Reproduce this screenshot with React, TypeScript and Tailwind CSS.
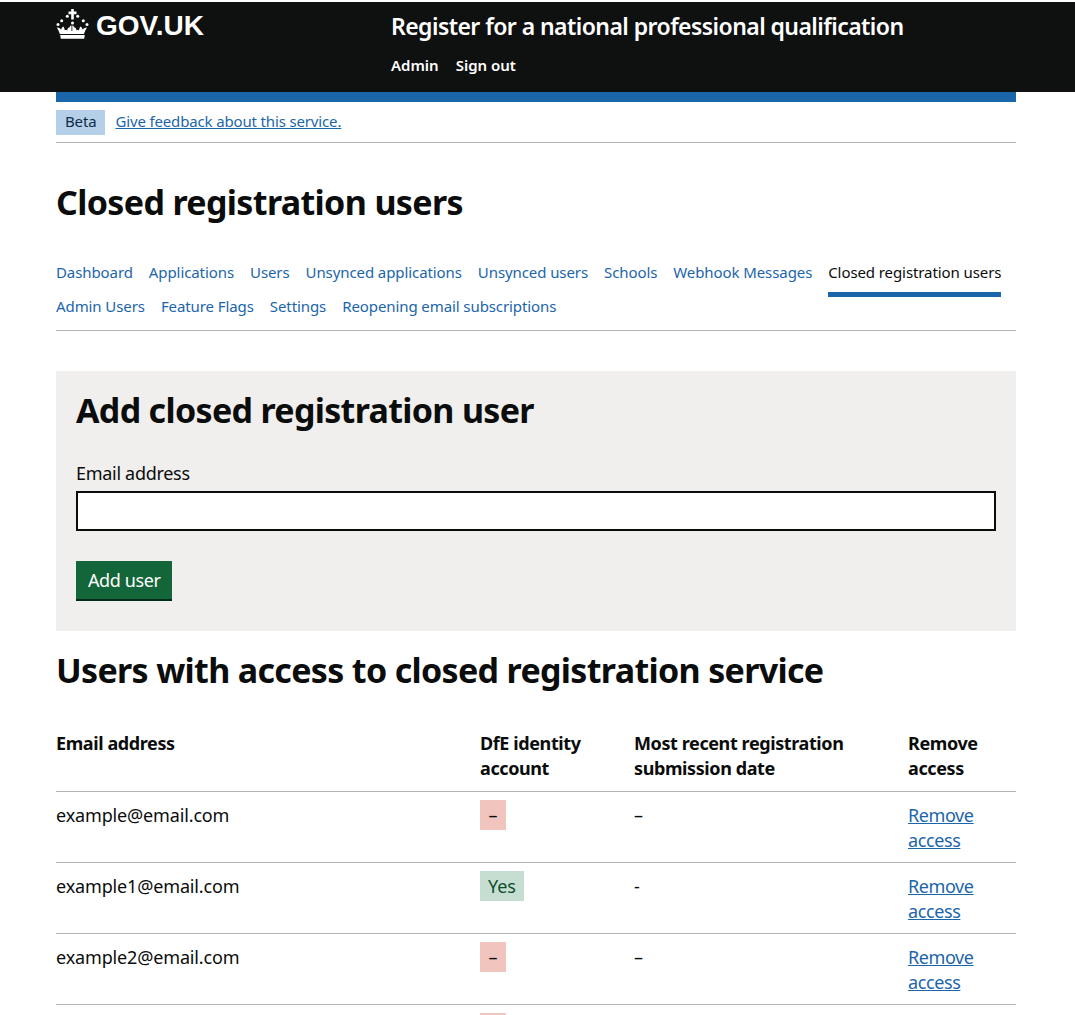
const rows = [
  { email: "example@email.com", yes: false, date: "–" },
  { email: "example1@email.com", yes: true, date: "-" },
  { email: "example2@email.com", yes: false, date: "–" },
  { email: "example3@email.com", yes: false, date: "–" },
];
const nav1 = ["Dashboard", "Applications", "Users", "Unsynced applications", "Unsynced users", "Schools", "Webhook Messages"];
const nav2 = ["Admin Users", "Feature Flags", "Settings", "Reopening email subscriptions"];

function Crown() {
  return (
    <svg width="33" height="30" viewBox="0 0 33 30" fill="#fff" aria-hidden="true" className="shrink-0">
      <path d="M15.2 0h2.600v2.600h2.700v2.600h-2.700v5.300h-2.600V5.200h-2.700V2.600h2.700z" />
      <circle cx="11.300" cy="7.300" r="1.500" /><circle cx="21.700" cy="7.300" r="1.500" />
      <circle cx="5.700" cy="11.700" r="1.500" /><circle cx="27.300" cy="11.700" r="1.500" />
      <circle cx="2" cy="15.500" r="1.500" /><circle cx="31" cy="15.500" r="1.500" />
      <circle cx="16.500" cy="14" r="1.500" />
      <path d="M0.800 18.500c2 0 3.400.7 4.200 2.200.5-1.400 1.300-2.900 2.300-3.300.8.800 1.300 2.300 1.500 3.800.9-.3 1.700-.2 2.500.3-.2-1.300.8-3 2.200-3.300l1.200-1.700.8 0v5.500h.8v-5.500h.8l1.200 1.700c1.400.3 2.400 2 2.200 3.300.8-.5 1.600-.6 2.500-.3.2-1.500.7-3 1.500-3.800 1 .4 1.800 1.900 2.300 3.300.8-1.500 2.200-2.200 4.200-2.200-1.300 2.200-2.400 4.400-3.100 6.500H3.900c-.7-2.100-1.800-4.300-3.100-6.500z" />
      <path d="M4.200 26h24.600l-.6 3.800H4.800z" />
    </svg>
  );
}

export default function App() {
  return (
    <div className="relative h-[1015px] overflow-hidden bg-white text-[#0b0c0c] font-['Noto_Sans',sans-serif]">
      <header className="mt-[2px] h-[90px] bg-[#0f1010] text-white">
        <div className="ml-[56px] flex w-[960px]">
          <div className="flex h-[48px] w-[335px] items-start gap-[7px] pt-[7px]">
            <Crown />
            <span className="mt-[-1px] font-['Liberation_Sans',sans-serif] text-[28px] font-bold leading-[36px]">GOV.UK</span>
          </div>
          <div>
            <div className="pt-[9px] text-[23px] font-semibold leading-[30px] tracking-[-0.56px]">Register for a national professional qualification</div>
            <div className="mt-[12px] flex gap-[17px] text-[15px] font-semibold leading-[25px]">
              <span>Admin</span>
              <span>Sign out</span>
            </div>
          </div>
        </div>
      </header>

      <main className="ml-[56px] w-[960px]">
        <div className="h-[10px] bg-[#1b65ab]" />
        <div className="flex h-[41px] items-start gap-[10px] border-b border-[#b1b4b6] pt-[8px] text-[15px] tracking-[-0.15px]">
          <span className="flex h-[25px] items-center bg-[#b6cfe8] px-[9px] pb-[2px] text-[#0c2d4a]">Beta</span>
          <a className="mt-[-1px] leading-[25px] text-[#1b65ab] underline">Give feedback about this service.</a>
        </div>

        <h1 className="mt-[37px] text-[34px] font-bold leading-[45px] tracking-[-0.64px]">Closed registration users</h1>

        <nav className="mt-[35px] border-b border-[#b1b4b6] pb-[11px] text-[15px] leading-[25px] tracking-[-0.09px]">
          <div className="flex h-[34px] items-start gap-[16px] whitespace-nowrap">
            {nav1.map((n) => <a key={n} className="text-[#1b65ab]">{n}</a>)}
            <span className="h-[37px] border-b-[5px] border-[#1b65ab]">Closed registration users</span>
          </div>
          <div className="flex h-[25px] gap-[16px] whitespace-nowrap">
            {nav2.map((n) => <a key={n} className="text-[#1b65ab]">{n}</a>)}
          </div>
        </nav>

        <section className="mt-[40px] h-[260px] bg-[#f0efee] px-[20px] pt-[19px]">
          <h2 className="text-[34px] font-bold leading-[40px] tracking-[-0.68px]">Add closed registration user</h2>
          <label className="mt-[31px] block text-[18px] leading-[25px] tracking-[-0.3px]">Email address</label>
          <input className="mt-[5px] block h-[40px] w-full border-2 border-[#0b0c0c] bg-white" />
          <button className="mt-[30px] block h-[40px] border-b-2 border-[#002d18] bg-[#13653a] px-[12px] text-[18px] tracking-[-0.4px] text-white">Add user</button>
        </section>

        <h2 className="mt-[19px] text-[34px] font-bold leading-[40px] tracking-[-0.67px]">Users with access to closed registration service</h2>

        <table className="mt-[41px] w-full table-fixed border-collapse text-[18px] leading-[25px] tracking-[-0.15px]">
          <colgroup>
            <col className="w-[424px]" />
            <col className="w-[154px]" />
            <col className="w-[274px]" />
            <col />
          </colgroup>
          <thead>
            <tr className="border-b border-[#b1b4b6] text-left align-top font-bold tracking-[-0.4px]">
              <th className="pb-[10px]">Email address</th>
              <th className="pb-[10px]">DfE identity<br />account</th>
              <th className="pb-[10px]">Most recent registration<br />submission date</th>
              <th className="pb-[10px]">Remove<br />access</th>
            </tr>
          </thead>
          <tbody>
            {rows.map((r) => (
              <tr key={r.email} className="border-b border-[#b1b4b6] align-top">
                <td className="pb-[9px] pt-[11px]">{r.email}</td>
                <td className="pb-[9px] pt-[8px]">
                  {r.yes ? (
                    <span className="inline-flex h-[30px] items-center bg-[#c6ddd2] px-[8px] text-[#0d4d2c]">Yes</span>
                  ) : (
                    <span className="inline-flex h-[30px] min-w-[26px] items-center justify-center bg-[#f1c4be]">–</span>
                  )}
                </td>
                <td className="pb-[9px] pt-[11px]">{r.date}</td>
                <td className="pb-[9px] pt-[11px] tracking-[-0.4px] text-[#1b65ab] underline">Remove<br />access</td>
              </tr>
            ))}
          </tbody>
        </table>
      </main>
    </div>
  );
}
